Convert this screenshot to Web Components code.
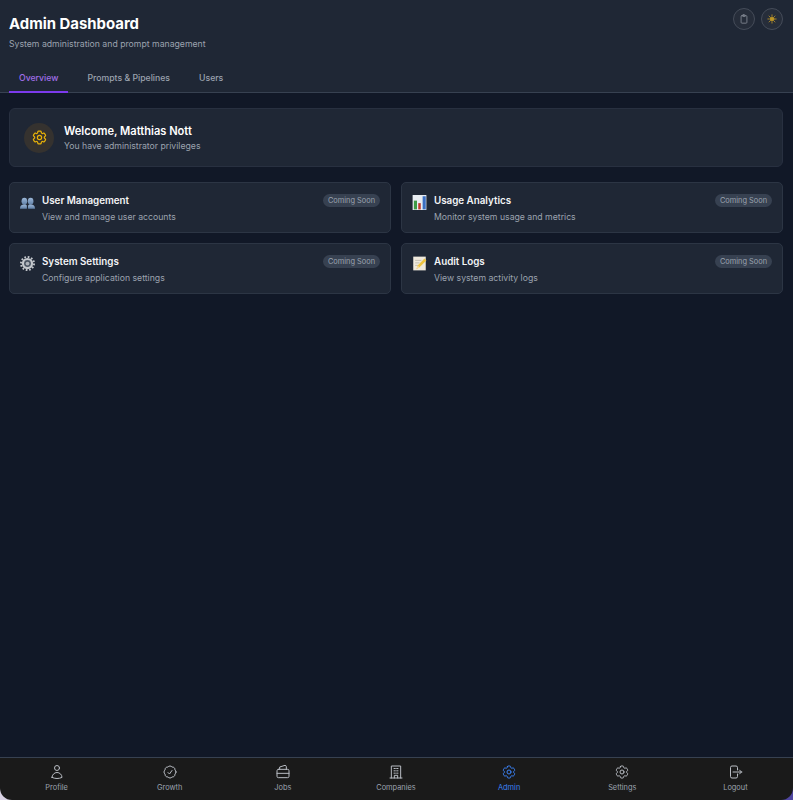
<!DOCTYPE html>
<html>
<head>
<meta charset="utf-8">
<title>Admin Dashboard</title>
<style>
    html, body { margin: 0; height: 100%; background: #111827; }
    body { font-family: Inter, "Noto Sans", sans-serif; color: #fff; }
</style>
</head>
<body>
<admin-app>
    <admin-header slot="header" heading="Admin Dashboard" sub="System administration and prompt management"></admin-header>
    <welcome-card name="Matthias Nott"></welcome-card>
    <card-grid>
        <feature-card heading="User Management" text="View and manage user accounts" icon="users"></feature-card>
        <feature-card heading="Usage Analytics" text="Monitor system usage and metrics" icon="chart"></feature-card>
        <feature-card heading="System Settings" text="Configure application settings" icon="gear"></feature-card>
        <feature-card heading="Audit Logs" text="View system activity logs" icon="memo"></feature-card>
    </card-grid>
    <bottom-nav slot="nav"></bottom-nav>
</admin-app>

<script>
const GEAR = '<path d="M9.594 3.94c.09-.542.56-.94 1.11-.94h2.593c.55 0 1.02.398 1.11.94l.213 1.281c.063.374.313.686.645.87.074.04.147.083.22.127.325.196.72.257 1.075.124l1.217-.456a1.125 1.125 0 0 1 1.37.49l1.296 2.247a1.125 1.125 0 0 1-.26 1.431l-1.003.827c-.293.241-.438.613-.43.992a7.723 7.723 0 0 1 0 .255c-.008.378.137.75.43.991l1.004.827c.424.35.534.955.26 1.43l-1.298 2.247a1.125 1.125 0 0 1-1.369.491l-1.217-.456c-.355-.133-.75-.072-1.076.124a6.47 6.47 0 0 1-.22.128c-.331.183-.581.495-.644.869l-.213 1.281c-.09.543-.56.94-1.11.94h-2.594c-.55 0-1.019-.398-1.11-.94l-.213-1.281c-.062-.374-.312-.686-.644-.87a6.52 6.52 0 0 1-.22-.127c-.325-.196-.72-.257-1.076-.124l-1.217.456a1.125 1.125 0 0 1-1.369-.49l-1.297-2.247a1.125 1.125 0 0 1 .26-1.431l1.004-.827c.292-.24.437-.613.43-.991a6.932 6.932 0 0 1 0-.255c.007-.38-.138-.751-.43-.992l-1.004-.827a1.125 1.125 0 0 1-.26-1.43l1.297-2.247a1.125 1.125 0 0 1 1.37-.491l1.216.456c.356.133.751.072 1.076-.124.072-.044.146-.086.22-.128.332-.183.582-.495.644-.869l.214-1.28Z"/><path d="M15 12a3 3 0 1 1-6 0 3 3 0 0 1 6 0Z"/>';

class AdminApp extends HTMLElement {
    constructor() {
        super();
        this.attachShadow({mode: 'open'});
        this.shadowRoot.innerHTML = `
        <style>
            :host { display: flex; flex-direction: column; height: 800px; background: linear-gradient(90deg, #d8d2e4 50%, #4f46a0 50%); }
            main { flex: 1; display: flex; flex-direction: column; gap: 15px; padding: 15px 10px 0 9px; background: #111827; }
        </style>
        <slot name="header"></slot>
        <main><slot></slot></main>
        <slot name="nav"></slot>
    `;
    }
}

class AdminHeader extends HTMLElement {
    constructor() {
        super();
        this.attachShadow({mode: 'open'});
        const tabs = ['Overview', 'Prompts &amp; Pipelines', 'Users'];
        this.shadowRoot.innerHTML = `
        <style>
            :host { display: block; background: #1f2735; border-bottom: 1px solid #374151; height: 92px; position: relative; z-index: 1; }
            h1 { margin: 0; padding: 15px 0 0 9px; font-size: 14.9px; line-height: 19px; font-weight: 700; }
            p { margin: 0; padding: 3px 0 0 9px; font-size: 8.7px; line-height: 15px; color: #9ca3af; }
            .tabs { display: flex; gap: 9px; padding: 13px 0 0 9px; }
            .tab { font-size: 8.7px; font-weight: 500; line-height: 15px; padding: 6px 10px 5px; color: #9ca3af; border-bottom: 2px solid transparent; }
            .tab.active { color: #a06ee8; border-bottom-color: #7c3aed; }
            .actions { position: absolute; top: 8px; right: 10px; display: flex; gap: 6px; }
            .actions button { width: 22px; height: 22px; padding: 0; border-radius: 50%; border: 1px solid #454c59; background: #262d3a; display: flex; align-items: center; justify-content: center; }
            svg { width: 10px; height: 10px; fill: none; stroke-width: 2; stroke-linecap: round; stroke-linejoin: round; }
        </style>
        <h1>${this.getAttribute('heading')}</h1>
        <p>${this.getAttribute('sub')}</p>
        <div class="tabs">
            ${tabs.map((t, i) => `<div class="tab ${i === 0 ? 'active' : ''}">${t}</div>`).join('')}
        </div>
        <div class="actions">
            <button><svg viewBox="0 0 24 24" stroke="#858b96"><rect x="5" y="4" width="14" height="18" rx="2"/><rect x="9" y="2" width="6" height="4" rx="1"/></svg></button>
            <button><svg viewBox="0 0 24 24" stroke="#bd9526"><circle cx="12" cy="12" r="5" fill="#bd9526"/><path d="M12 2v2M12 20v2M4.900 4.900l1.400 1.400M17.700 17.700l1.400 1.400M2 12h2M20 12h2M4.900 19.100l1.400-1.400M17.700 6.300l1.400-1.400"/></svg></button>
        </div>
    `;
    }
}

class WelcomeCard extends HTMLElement {
    constructor() {
        super();
        this.attachShadow({mode: 'open'});
        this.shadowRoot.innerHTML = `
        <style>
            :host { display: flex; align-items: center; gap: 10px; height: 57px; padding: 0 14px; background: #1f2735; border: 1px solid #283040; border-radius: 6px; }
            .icon { width: 30px; height: 30px; border-radius: 50%; background: #35322f; display: flex; align-items: center; justify-content: center; }
            svg { width: 17px; height: 17px; fill: none; stroke: #eab308; stroke-width: 1.7; stroke-linejoin: round; }
            .text { padding-top: 2px; }
            h2 { margin: 0; font-size: 11.1px; line-height: 15px; font-weight: 600; color: #fff; }
            p { margin: 0; font-size: 8.7px; line-height: 15px; color: #9ca3af; }
        </style>
        <div class="icon"><svg viewBox="0 0 24 24">${GEAR}</svg></div>
        <div class="text">
            <h2>Welcome, ${this.getAttribute('name')}</h2>
            <p>You have administrator privileges</p>
        </div>
    `;
    }
}

class CardGrid extends HTMLElement {
    constructor() {
        super();
        this.attachShadow({mode: 'open'});
        this.shadowRoot.innerHTML = `
        <style>
            :host { display: grid; grid-template-columns: 1fr 1fr; gap: 10px; }
        </style>
        <slot></slot>
    `;
    }
}

const CARD_ICONS = {
    users: '<defs><linearGradient id="u" x1="0" y1="0" x2="0" y2="1"><stop offset="0" stop-color="#9db8d8"/><stop offset="1" stop-color="#5f7fa6"/></linearGradient></defs><g fill="url(#u)"><ellipse cx="7" cy="10" rx="4.500" ry="5.500"/><path d="M0 22c0-5 2-7 7-7s4 2 4 7z"/><ellipse cx="17" cy="10" rx="4.500" ry="5.500"/><path d="M13 22c0-5-1-7 4-7s7 2 7 7z"/></g>',
    chart: '<rect x="1" y="0" width="22" height="24" fill="#e8edf2"/><rect x="3" y="9" width="5" height="14" fill="#3d9b46"/><rect x="10" y="13" width="4" height="10" fill="#c0392b"/><rect x="17" y="2" width="5" height="21" fill="#3b6fc2"/>',
    gear: '<circle cx="12" cy="12" r="9" fill="#c4c8cd"/><circle cx="12" cy="12" r="10.500" fill="none" stroke="#c4c8cd" stroke-width="3" stroke-dasharray="2.750 2.750"/><circle cx="12" cy="12" r="5.500" fill="#4b5563"/><circle cx="12" cy="12" r="3" fill="#aeb3ba"/>',
    memo: '<rect x="2" y="1" width="20" height="22" fill="#efe9dc"/><path d="M5 7h10M5 11h7M5 15h5" stroke="#a9a59a" stroke-width="1"/><path d="M7 21l2-6L20 4l3 3-11 11z" fill="#eec43f"/><path d="M7 21l2-6 3 3z" fill="#f3d9a8"/>'
};

class FeatureCard extends HTMLElement {
    constructor() {
        super();
        this.attachShadow({mode: 'open'});
        this.shadowRoot.innerHTML = `
        <style>
            :host { display: flex; gap: 7px; height: 51px; box-sizing: border-box; padding: 10px 10px 0 10px; background: #1f2735; border: 1px solid #2c3544; border-radius: 5px; }
            svg { width: 15px; height: 15px; flex: none; margin-top: 2px; }
            .body { flex: 1; min-width: 0; }
            .top { display: flex; justify-content: space-between; align-items: center; }
            h3 { margin: 0; font-size: 9.8px; line-height: 15px; font-weight: 600; color: #f3f4f6; }
            .badge { font-size: 7.4px; line-height: 13px; color: #9ca3af; background: #374151; padding: 0 5px; border-radius: 7px; }
            p { margin: 1.500px 0 0; font-size: 8.7px; line-height: 14px; color: #9ca3af; }
        </style>
        <svg viewBox="0 0 24 24">${CARD_ICONS[this.getAttribute('icon')]}</svg>
        <div class="body">
            <div class="top"><h3>${this.getAttribute('heading')}</h3><span class="badge">Coming Soon</span></div>
            <p>${this.getAttribute('text')}</p>
        </div>
    `;
    }
}

const NAV_ITEMS = [
    ['Profile', '<path d="M15.750 6a3.750 3.750 0 1 1-7.500 0 3.750 3.750 0 0 1 7.500 0ZM4.501 20.118a7.500 7.500 0 0 1 14.998 0A17.933 17.933 0 0 1 12 21.750c-2.676 0-5.216-.584-7.499-1.632Z"/>'],
    ['Growth', '<path d="M9 12.750 11.250 15 15 9.750M21 12c0 1.268-.63 2.390-1.593 3.068a3.745 3.745 0 0 1-1.043 3.296 3.745 3.745 0 0 1-3.296 1.043A3.745 3.745 0 0 1 12 21c-1.268 0-2.390-.63-3.068-1.593a3.746 3.746 0 0 1-3.296-1.043 3.745 3.745 0 0 1-1.043-3.296A3.745 3.745 0 0 1 3 12c0-1.268.63-2.390 1.593-3.068a3.745 3.745 0 0 1 1.043-3.296 3.746 3.746 0 0 1 3.296-1.043A3.746 3.746 0 0 1 12 3c1.268 0 2.390.63 3.068 1.593a3.746 3.746 0 0 1 3.296 1.043 3.746 3.746 0 0 1 1.043 3.296A3.745 3.745 0 0 1 21 12Z"/>'],
    ['Jobs', '<rect x="3" y="8" width="18" height="12.500" rx="2"/><path d="M3 14h18M7 8V4.500L15 2c1 0 2 .8 2 2v4"/>'],
    ['Companies', '<path d="M3 21h18M5 21V3h14v18M9 6.750h2m-2 3.500h2m-2 3.500h2m2-7h2m-2 3.500h2m-2 3.500h2M9.500 21v-4h5v4"/>'],
    ['Admin', GEAR],
    ['Settings', GEAR],
    ['Logout', '<path d="M15.750 9V5.250A2.250 2.250 0 0 0 13.500 3h-6a2.250 2.250 0 0 0-2.250 2.250v13.500A2.250 2.250 0 0 0 7.500 21h6a2.250 2.250 0 0 0 2.250-2.250V15m3 0 3-3m0 0-3-3m3 3H9"/>']
];

class BottomNav extends HTMLElement {
    constructor() {
        super();
        this.attachShadow({mode: 'open'});
        this.shadowRoot.innerHTML = `
        <style>
            :host { display: flex; height: 42px; padding-right: 1px; background: #1a1a1a; border-top: 1px solid #374151; border-radius: 0 0 12px 12px; }
            .item { flex: 1; display: flex; flex-direction: column; align-items: center; padding-top: 6px; font-size: 7.4px; line-height: 11px; color: #9ca3af; gap: 2px; }
            .item.active { color: #3b82f6; }
            svg { width: 16px; height: 16px; fill: none; stroke: #b8bcc3; stroke-width: 1.5; stroke-linecap: round; stroke-linejoin: round; }
            .item.active svg { stroke: #3b82f6; }
        </style>
        ${NAV_ITEMS.map(([label, icon]) => `
            <div class="item ${label === 'Admin' ? 'active' : ''}">
                <svg viewBox="0 0 24 24">${icon}</svg>
                <span>${label}</span>
            </div>`).join('')}
    `;
    }
}

customElements.define('admin-app', AdminApp);
customElements.define('admin-header', AdminHeader);
customElements.define('welcome-card', WelcomeCard);
customElements.define('card-grid', CardGrid);
customElements.define('feature-card', FeatureCard);
customElements.define('bottom-nav', BottomNav);
</script>
</body>
</html>
